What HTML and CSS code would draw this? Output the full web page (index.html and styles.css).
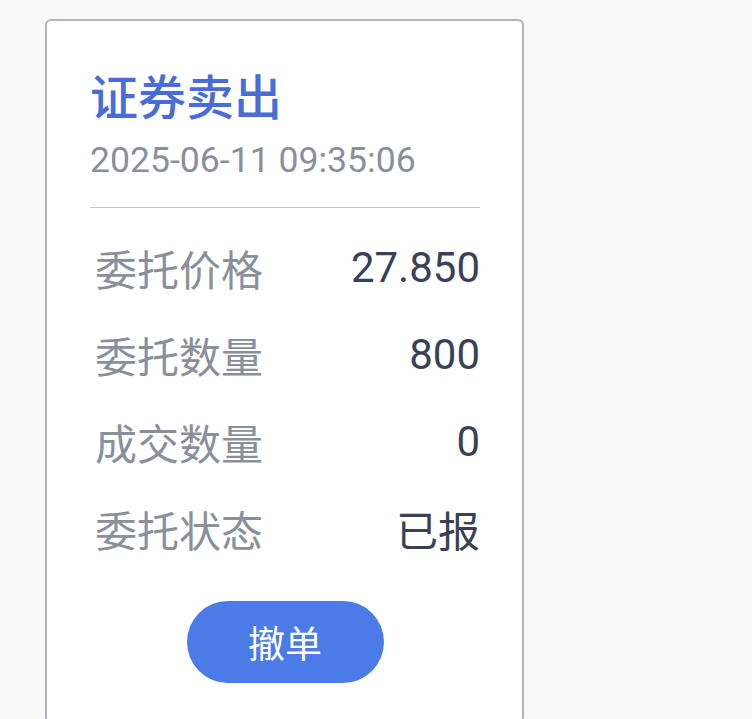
FILE: index.html
```html
<!DOCTYPE html>
<html lang="zh-CN">
<head>
    <meta charset="UTF-8">
    <meta name="viewport" content="width=device-width, initial-scale=1.0">
    <title>委托详情</title>
    <link rel="stylesheet" href="styles.css">
</head>
<body>
    <div class="order-card">
        <div class="order-head">
            <h1 class="order-type">证券卖出</h1>
            <p class="order-time">2025-06-11 09:35:06</p>
        </div>
        <div class="order-rows">
            <div class="order-row">
                <span class="row-label">委托价格</span>
                <span class="row-value">27.850</span>
            </div>
            <div class="order-row">
                <span class="row-label">委托数量</span>
                <span class="row-value">800</span>
            </div>
            <div class="order-row">
                <span class="row-label">成交数量</span>
                <span class="row-value">0</span>
            </div>
            <div class="order-row">
                <span class="row-label">委托状态</span>
                <span class="row-value">已报</span>
            </div>
        </div>
        <div class="order-actions">
            <button class="cancel-btn" type="button">撤单</button>
        </div>
    </div>
</body>
</html>
```

FILE: styles.css
```css
body {
    font-family: Roboto, "Noto Sans CJK SC", sans-serif;
    margin: 0;
    padding: 19px 0 0 45px;
    background-color: #f9f9f9;
    overflow: hidden;
}
.order-card {
    width: 479px;
    min-height: 705px;
    box-sizing: border-box;
    background-color: #fff;
    border: 2px solid #b3b3bb;
    border-radius: 6px;
    padding: 47px 42px 0 43px;
}
.order-head {
    border-bottom: 1px solid #c4c4c9;
    padding-bottom: 22px;
}
.order-type {
    margin: 0;
    font-size: 48px;
    font-weight: 500;
    line-height: 62px;
    color: #4a6cd6;
}
.order-time {
    margin: 5px 0 0;
    font-size: 35.6px;
    line-height: 50px;
    color: #8b8f9a;
}
.order-rows {
    margin-top: 16px;
}
.order-row {
    display: flex;
    justify-content: space-between;
    align-items: center;
    height: 87px;
    padding: 0 0 0 5px;
    font-size: 42px;
}
.row-label {
    color: #8b8f9a;
}
.row-value {
    color: #3a4157;
}
.order-actions {
    display: flex;
    justify-content: center;
    margin-top: 29px;
}
.cancel-btn {
    width: 197px;
    height: 82px;
    border: none;
    border-radius: 41px;
    background-color: #4a7be6;
    color: #fff;
    font-family: inherit;
    font-size: 37px;
    cursor: pointer;
}
```
